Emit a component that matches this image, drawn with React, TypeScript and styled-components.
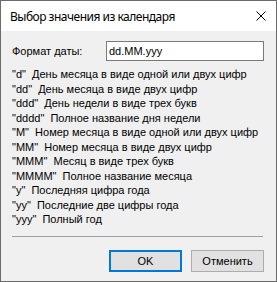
import React from "react";
import styled, { createGlobalStyle } from "styled-components";

const Global = createGlobalStyle`
  html, body { margin: 0; padding: 0; background: #ffffff; }
  * { box-sizing: border-box; }
`;

const Window = styled.div`
  width: 277px;
  height: 282px;
  border: 1px solid #6b6b6b;
  display: flex;
  flex-direction: column;
  background: #f0f0f0;
  font-family: "Liberation Sans", Arial, sans-serif;
  font-size: 11px;
  color: #000;
`;

const TitleBar = styled.div`
  height: 30px;
  flex: 0 0 30px;
  background: #ffffff;
  display: flex;
  align-items: center;
  justify-content: space-between;
  padding: 0 10px 0 9px;
`;

const Title = styled.div`
  font-family: "Noto Sans", "Segoe UI", sans-serif;
  font-size: 12px;
  letter-spacing: -0.5px;
  color: #000;
  margin-top: 1px;
`;

const CloseBtn = styled.div`
  width: 10px;
  height: 10px;
  display: flex;
`;

const Body = styled.div`
  flex: 1;
  display: flex;
  flex-direction: column;
  padding: 10px 12px 0 11px;
`;

const FormatRow = styled.div`
  display: flex;
  align-items: center;
`;

const Label = styled.span`
  width: 94px;
  flex: 0 0 94px;
`;

const Input = styled.div`
  width: 159px;
  height: 20px;
  background: #fff;
  border: 1px solid #7a7a7a;
  display: flex;
  align-items: center;
  padding-left: 2px;
  font-size: 11px;
`;

const List = styled.div`
  margin-top: 6px;
  display: flex;
  flex-direction: column;
`;

const Line = styled.div`
  height: 14.5px;
  line-height: 14.5px;
  white-space: pre;
`;

const Separator = styled.div`
  margin-top: 9px;
  height: 1px;
  background: #a0a0a0;
  margin-right: 1px;
`;

const Buttons = styled.div`
  display: flex;
  justify-content: flex-end;
  gap: 9px;
  margin-top: 13px;
`;

const Button = styled.div<{ $primary?: boolean }>`
  width: 73px;
  height: 22px;
  background: #e1e1e1;
  border: ${(p) => (p.$primary ? "2px solid #0078d7" : "1px solid #adadad")};
  display: flex;
  align-items: center;
  justify-content: center;
  font-size: 11px;
`;

const lines = [
  ['"d"', "День месяца в виде одной или двух цифр"],
  ['"dd"', "День месяца в виде двух цифр"],
  ['"ddd"', "День недели в виде трех букв"],
  ['"dddd"', "Полное название дня недели"],
  ['"M"', "Номер месяца в виде одной или двух цифр"],
  ['"MM"', "Номер месяца в виде двух цифр"],
  ['"MMM"', "Месяц в виде трех букв"],
  ['"MMMM"', "Полное название месяца"],
  ['"y"', "Последняя цифра года"],
  ['"yy"', "Последние две цифры года"],
  ['"yyy"', "Полный год"],
];

export default function App() {
  return (
    <>
      <Global />
      <Window>
        <TitleBar>
          <Title>Выбор значения из календаря</Title>
          <CloseBtn>
            <svg width="10" height="10" viewBox="0 0 10 10">
              <path d="M0.5 0.5 L9.5 9.5 M9.5 0.5 L0.5 9.5" stroke="#000" strokeWidth="1" />
            </svg>
          </CloseBtn>
        </TitleBar>
        <Body>
          <FormatRow>
            <Label>Формат даты:</Label>
            <Input>dd.MM.yyy</Input>
          </FormatRow>
          <List>
            {lines.map(([k, v]) => (
              <Line key={k}>{`${k}  ${v}`}</Line>
            ))}
          </List>
          <Separator />
          <Buttons>
            <Button $primary>OK</Button>
            <Button>Отменить</Button>
          </Buttons>
        </Body>
      </Window>
    </>
  );
}
